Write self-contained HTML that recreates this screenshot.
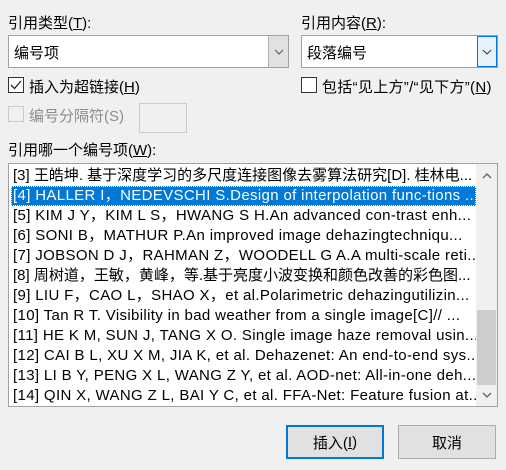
<!DOCTYPE html>
<html><head><meta charset="utf-8"><style>
*{box-sizing:border-box;margin:0;padding:0}
body{width:506px;height:470px;background:#f0f0f0;font-family:"Liberation Sans","Noto Sans CJK SC",sans-serif;font-size:15px;color:#000;position:relative;overflow:hidden}
.a{position:absolute;white-space:nowrap}
u{text-decoration:underline}
.combo{position:absolute;background:#fff;border:1px solid #a0a0a0}
.combo .t{position:absolute;left:5px;top:6px}
.btn{position:absolute;top:0;bottom:0;width:20px;display:flex;align-items:center;justify-content:center}
.cb{position:absolute;width:16px;height:16px;border:1px solid #333;background:#fff}
.list{position:absolute;left:8px;top:163px;width:490px;height:244px;background:#fff;border:1px solid #a0a0a0}
.row{position:absolute;left:2px;width:465px;height:20px;line-height:20px;padding-left:2px;overflow:hidden;white-space:nowrap;color:#000}
.l{letter-spacing:0.35px}
.sel{background:#0078d7;color:#fff;outline:1px dotted #fff;outline-offset:-1px}
.pb{position:absolute;top:425px;height:34px;width:98px;background:#e1e1e1;border:1px solid #adadad;display:flex;align-items:center;justify-content:center}
</style></head><body>
<div class="a" style="left:8px;top:12px">引用类型(<u>T</u>):</div>
<div class="a" style="left:301px;top:12px">引用内容(<u>R</u>):</div>
<div class="combo" style="left:8px;top:35px;width:281px;height:33px"><span class="t">编号项</span>
<div class="btn" style="right:0;background:#e1e1e1;border-left:1px solid #b0b0b0"><svg width="10" height="6"><path d="M1 1L5 5L9 1" stroke="#555" fill="none"/></svg></div></div>
<div class="combo" style="left:301px;top:35px;width:197px;height:33px"><span class="t">段落编号</span>
<div class="btn" style="right:0;background:#e5f1fb;border:1px solid #0078d7"><svg width="10" height="6"><path d="M1 1L5 5L9 1" stroke="#333" fill="none"/></svg></div></div>
<div class="cb" style="left:8px;top:77px"><svg width="14" height="14" style="position:absolute;left:0;top:0"><path d="M2 7L5.5 10.5L12 3" stroke="#222" stroke-width="1.3" fill="none"/></svg></div>
<div class="a" style="left:29px;top:76px">插入为超链接(<u>H</u>)</div>
<div class="cb" style="left:301px;top:77px"></div>
<div class="a" style="left:322px;top:76px;letter-spacing:0.3px">包括“见上方”/“见下方”(<u>N</u>)</div>
<div class="cb" style="left:8px;top:106px;border-color:#ccc;background:#f0f0f0"></div>
<div class="a" style="left:29px;top:105px;color:#8d8d8d">编号分隔符(S)</div>
<div class="a" style="left:139px;top:103px;width:48px;height:30px;border:1px solid #ccc;background:#f0f0f0"></div>
<div class="a" style="left:8px;top:139px">引用哪一个编号项(<u>W</u>):</div>
<div class="list">
<div class="row" style="top:2px">[3] 王皓坤. 基于深度学习的多尺度连接图像去雾算法研究[D]. 桂林电...</div>
<div class="row sel l" style="top:22px">[4] HALLER I，NEDEVSCHI S.Design of interpolation func-tions ..</div>
<div class="row l" style="top:42px">[5] KIM J Y，KIM L S，HWANG S H.An advanced con-trast enh...</div>
<div class="row l" style="top:62px">[6] SONI B，MATHUR P.An improved image dehazingtechniqu...</div>
<div class="row l" style="top:82px">[7] JOBSON D J，RAHMAN Z，WOODELL G A.A multi-scale reti...</div>
<div class="row" style="top:102px">[8] 周树道，王敏，黄峰，等.基于亮度小波变换和颜色改善的彩色图...</div>
<div class="row l" style="top:122px">[9] LIU F，CAO L，SHAO X，et al.Polarimetric dehazingutilizin...</div>
<div class="row l" style="top:142px">[10] Tan R T. Visibility in bad weather from a single image[C]// ...</div>
<div class="row l" style="top:162px">[11] HE K M, SUN J, TANG X O. Single image haze removal usin...</div>
<div class="row l" style="top:182px">[12] CAI B L, XU X M, JIA K, et al. Dehazenet: An end-to-end sys...</div>
<div class="row l" style="top:202px">[13] LI B Y, PENG X L, WANG Z Y, et al. AOD-net: All-in-one deh...</div>
<div class="row l" style="top:222px">[14] QIN X, WANG Z L, BAI Y C, et al. FFA-Net: Feature fusion at...</div>
<div style="position:absolute;left:467px;top:0;width:21px;height:242px;background:#f0f0f0"></div>
<svg style="position:absolute;left:473px;top:8px" width="10" height="7"><path d="M1 6L5 2L9 6" stroke="#606060" stroke-width="1.3" fill="none"/></svg>
<div style="position:absolute;left:468px;top:146px;width:19px;height:75px;background:#cdcdcd"></div>
<svg style="position:absolute;left:473px;top:228px" width="10" height="7"><path d="M1 1L5 5L9 1" stroke="#606060" stroke-width="1.3" fill="none"/></svg>
</div>
<div class="pb" style="left:286px;border:2px solid #0078d7">插入(<u>I</u>)</div>
<div class="pb" style="left:398px">取消</div>
</body></html>
